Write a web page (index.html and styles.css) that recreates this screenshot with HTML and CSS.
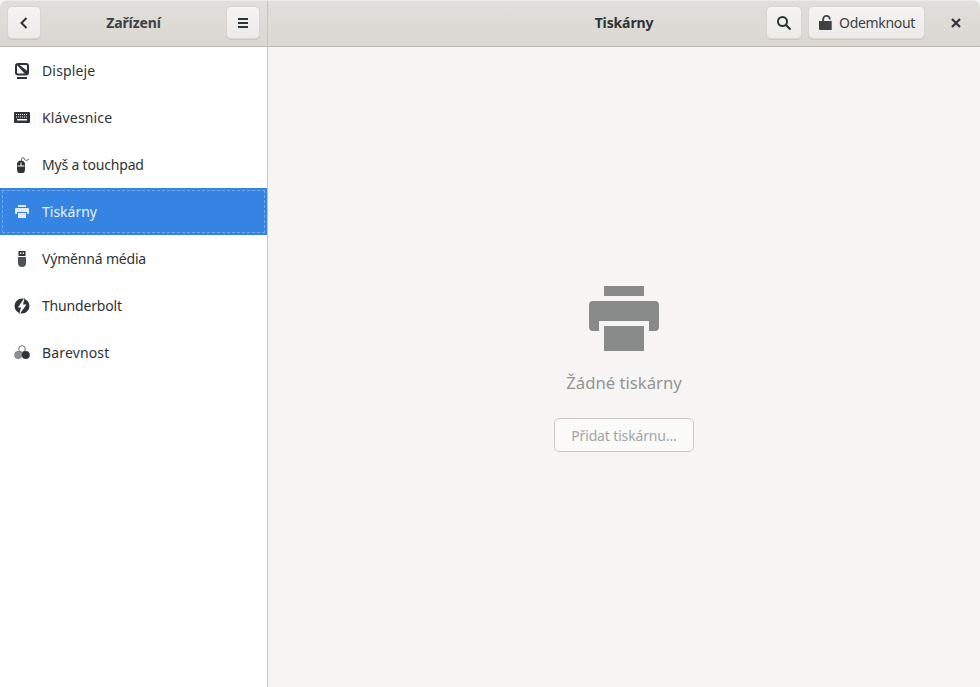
FILE: index.html
```html
<!DOCTYPE html>
<html lang="cs">
<head>
<meta charset="utf-8">
<title>Tiskárny</title>
<link rel="stylesheet" href="styles.css">
</head>
<body>
<div class="window">
  <header class="titlebar">
    <div class="bar-left">
      <button class="btn btn-icon"><svg class="ico" viewBox="0 0 16 16"><path d="M10.500 3 5.500 8l5 5" fill="none" stroke="currentColor" stroke-width="2"/></svg></button>
      <h1 class="title title-left">Zařízení</h1>
      <button class="btn btn-icon"><svg class="ico" viewBox="0 0 16 16"><path d="M3 3h10v2H3zM3 7h10v2H3zM3 11h10v2H3z" fill="currentColor"/></svg></button>
    </div>
    <div class="bar-right">
      <h1 class="title title-right">Tiskárny</h1>
      <button class="btn btn-search"><svg class="ico" viewBox="0 0 16 16"><circle cx="6.500" cy="6.500" r="4.500" fill="none" stroke="currentColor" stroke-width="2"/><path d="m9.700 9.700 4.800 4.800" stroke="currentColor" stroke-width="2.200" fill="none"/></svg></button>
      <button class="btn btn-unlock"><svg class="ico" viewBox="0 0 16 16"><path d="M1 6h12.700v9H2a1 1 0 0 1-1-1z" fill="currentColor"/><path d="M5.200 7V4.200a3.300 3.300 0 0 1 6.600 0v.3" fill="none" stroke="currentColor" stroke-width="1.800"/></svg><span class="unlock-label">Odemknout</span></button>
      <button class="btn-close"><svg class="ico" viewBox="0 0 16 16"><path d="m4 4 8 8m0-8-8 8" fill="none" stroke="currentColor" stroke-width="2.200"/></svg></button>
    </div>
  </header>
  <div class="content">
    <nav class="sidebar">
      <div class="row">
        <svg class="ico" viewBox="0 0 16 16"><rect x="2" y="1" width="12" height="10.500" rx="2" fill="none" stroke="currentColor" stroke-width="2"/><path d="M2.500 1.500 5 1.500 13.500 8V11H11z" fill="currentColor"/><path d="M3 14h10v2H3z" fill="currentColor"/></svg>
        <span class="label-wide">Displeje</span>
      </div>
      <div class="row">
        <svg class="ico" viewBox="0 0 16 16"><path fill-rule="evenodd" d="M1 2h14a1 1 0 0 1 1 1v9a1 1 0 0 1-1 1H1a1 1 0 0 1-1-1V3a1 1 0 0 1 1-1zm1 2v1h1V4zm2 0v1h1V4zm2 0v1h1V4zm2 0v1h1V4zm2 0v1h1V4zm2 0v1h1V4zM2 6.500v1h1v-1zm2 0v1h1v-1zm2 0v1h1v-1zm2 0v1h1v-1zm2 0v1h1v-1zm2 0v1h1v-1zM3 9v1.500h10V9z" fill="currentColor"/></svg>
        <span class="label-wide">Klávesnice</span>
      </div>
      <div class="row">
        <svg class="ico" viewBox="0 0 16 16"><path fill-rule="evenodd" d="M7 3.500a4 4 0 0 1 4 3.500v5.500a4 4 0 0 1-8 0V7a4 4 0 0 1 4-3.500zM6.500 5.500v3h-3v1h7v-1h-3v-3z" fill="currentColor"/><path d="M7.500 3.500V2.200a1.500 1.500 0 0 1 3 0c.2 1.600 3.300 1.600 4.500-.2" fill="none" stroke="currentColor" stroke-width=".9" opacity=".8"/></svg>
        <span class="label-narrow">Myš a touchpad</span>
      </div>
      <div class="row row-selected">
        <span class="focus-ring"></span>
        <svg class="ico" viewBox="0 0 16 16"><path d="M4 1h8v2H4zM2 4h12a1 1 0 0 1 1 1v4a1 1 0 0 1-1 1h-1V8H3v2H2a1 1 0 0 1-1-1V5a1 1 0 0 1 1-1z" fill="currentColor"/><path d="M4 9h8v5H4z" fill="currentColor"/></svg>
        <span class="row-label">Tiskárny</span>
      </div>
      <div class="row">
        <svg class="ico" viewBox="0 0 16 16"><path fill-rule="evenodd" d="M4.500 0h7v5h-7zm1.500 1.500v1.500h1.300V1.500zm2.700 0v1.500H10V1.500z" fill="currentColor"/><path d="M4 6h8v6a4 4 0 0 1-8 0z" fill="currentColor" opacity=".85"/></svg>
        <span class="label-narrow">Výměnná média</span>
      </div>
      <div class="row">
        <svg class="ico" viewBox="0 0 16 16"><path fill-rule="evenodd" d="M8 .500a7.500 7.500 0 1 1 0 15 7.500 7.500 0 0 1 0-15zM11 -1 4 9.500h3L5 17l7.500-10.500H9z" fill="currentColor"/></svg>
        <span class="label-narrow">Thunderbolt</span>
      </div>
      <div class="row">
        <svg class="ico" viewBox="0 0 16 16"><circle cx="8" cy="4" r="3.300" fill="none" stroke="currentColor" stroke-width="1" opacity=".7"/><circle cx="4.200" cy="10" r="4" fill="currentColor" opacity=".55"/><circle cx="11.800" cy="10" r="4" fill="currentColor"/></svg>
        <span class="label-wide">Barevnost</span>
      </div>
    </nav>
    <main class="main">
      <svg class="printer" viewBox="0 0 70 65"><path d="M15 0h40v10H15zM4 15h62a4 4 0 0 1 4 4v22a4 4 0 0 1-4 4h-6V35H10v10H4a4 4 0 0 1-4-4V19a4 4 0 0 1 4-4zM15 40h40v25H15z"/></svg>
      <p class="empty">Žádné tiskárny</p>
      <button class="btn-add">Přidat tiskárnu…</button>
    </main>
  </div>
</div>
</body>
</html>
```
FILE: styles.css
```css
* { box-sizing: border-box; }
html, body { margin: 0; height: 100%; background: #f4f4f4; }
body { font-family: "Noto Sans", "Open Sans", sans-serif; font-size: 14px; color: #2e3436; }
.window {
  width: 980px; height: 687px; display: flex; flex-direction: column;
  border-radius: 8px 8px 0 0; overflow: hidden; background: #f6f5f4;
}
.titlebar {
  height: 47px; flex: none; display: flex;
  background: linear-gradient(#e1dedb, #dbd8d3);
  border-top: 1px solid #eceae7; border-bottom: 1px solid #bfb8b1;
}
.bar-left {
  width: 268px; flex: none; display: flex; align-items: center; justify-content: space-between;
  padding: 0 7px 2px 7px; border-right: 1px solid #c9c4be;
}
.bar-right { flex: 1; display: flex; align-items: center; padding: 0 11px 2px 0; position: relative; }
.title { margin: 0; font-size: 14px; font-weight: 700; color: #2e3436; letter-spacing: -.12px; }
.title-left { color: #3d4143; }
.title-right { position: absolute; left: 0; right: 0; text-align: center; }
.btn {
  height: 33px; display: flex; align-items: center; justify-content: center;
  padding: 0; border: 1px solid #d9d5d0; border-radius: 5px;
  background: linear-gradient(#f5f4f3, #edebe9); color: #2e3436; box-shadow: 0 1px #c9c5bf;
  font: inherit; position: relative;
}
.btn-icon { width: 34px; }
.btn-search { width: 36px; margin-left: auto; }
.btn-unlock { width: 117px; margin-left: 6px; gap: 5px; color: #3d4143; }
.unlock-label { letter-spacing: -.33px; }
.btn-close { width: 26px; height: 26px; margin: 0 0 0 18px; padding: 0; border: 0; background: none; color: #2e3436; display: flex; align-items: center; justify-content: center; }
.ico { width: 16px; height: 16px; flex: none; }
.content { flex: 1; display: flex; min-height: 0; }
.sidebar { width: 268px; flex: none; background: #fff; border-right: 1px solid #c9c4be; }
.row { height: 47px; display: flex; align-items: center; gap: 12px; padding-left: 14px; color: #2e3436; position: relative; }
.label-wide { letter-spacing: .15px; }
.label-narrow { letter-spacing: -.18px; }
.row-selected { background: #3584e4; color: #fff; }
.row-selected .ico { opacity: .85; }
.row-label { opacity: .9; }
.focus-ring { position: absolute; inset: 2px; border: 1px dashed rgba(255,255,255,.3); pointer-events: none; }
.main { flex: 1; display: flex; flex-direction: column; align-items: center; padding-top: 239px; background: #f6f5f4; }
.printer { width: 70px; height: 65px; fill: #888a8a; }
.empty { margin: 21px 0 0; font-size: 16.700px; line-height: 22px; color: #929595; }
.btn-add {
  width: 140px; height: 34px; margin-top: 24px; padding: 0; font: inherit; letter-spacing: -.15px; color: #a2a5a5;
  background: #fafaf9; border: 1px solid #cdc7c2; border-radius: 5px;
}
```
